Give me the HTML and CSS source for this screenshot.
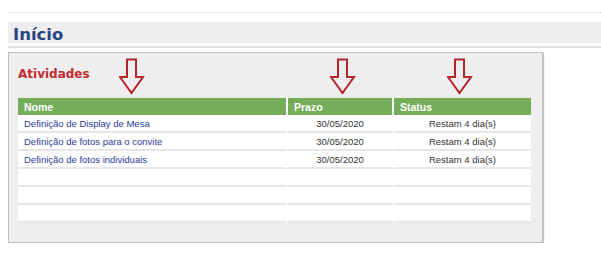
FILE: index.html
```html
<!DOCTYPE html>
<html lang="pt-BR">
  <head>
    <meta charset="UTF-8" />
    <title>Início</title>
    <link rel="stylesheet" href="styles.css">
  </head>
  <body>
    <div class="page">
      <div class="top-line"></div>
      <div class="title-bar">
        <h1>Início</h1>
      </div>
      <div class="title-rule"></div>

      <div class="panel">
        <h2>Atividades</h2>

        <svg class="arrow arrow-nome" width="26" height="37" viewBox="0 0 26 37">
          <path d="M8 1.5 H17 V19 H24 L12.5 35 L1 19 H8 Z" />
        </svg>
        <svg class="arrow arrow-prazo" width="26" height="37" viewBox="0 0 26 37">
          <path d="M8 1.5 H17 V19 H24 L12.5 35 L1 19 H8 Z" />
        </svg>
        <svg class="arrow arrow-status" width="26" height="37" viewBox="0 0 26 37">
          <path d="M8 1.5 H17 V19 H24 L12.5 35 L1 19 H8 Z" />
        </svg>

        <table class="grid">
          <thead>
            <tr>
              <th class="col-nome">Nome</th>
              <th class="col-prazo">Prazo</th>
              <th class="col-status">Status</th>
            </tr>
          </thead>
          <tbody>
            <tr>
              <td><a href="#">Definição de Display de Mesa</a></td>
              <td class="center">30/05/2020</td>
              <td class="center">Restam 4 dia(s)</td>
            </tr>
            <tr>
              <td><a href="#">Definição de fotos para o convite</a></td>
              <td class="center">30/05/2020</td>
              <td class="center">Restam 4 dia(s)</td>
            </tr>
            <tr>
              <td><a href="#">Definição de fotos individuais</a></td>
              <td class="center">30/05/2020</td>
              <td class="center">Restam 4 dia(s)</td>
            </tr>
            <tr><td></td><td></td><td></td></tr>
            <tr><td></td><td></td><td></td></tr>
            <tr><td></td><td></td><td></td></tr>
          </tbody>
        </table>
      </div>
    </div>
  </body>
</html>
```

FILE: styles.css
```css
* {
  box-sizing: border-box;
  margin: 0;
  padding: 0;
}

body {
  font-family: "Liberation Sans", Arial, sans-serif;
  background-color: #fff;
  color: #333;
}

.page {
  padding: 12px 0 0 8px;
}

.top-line {
  border-top: 1px dotted #d4d4d4;
  margin-bottom: 9px;
}

.title-bar {
  background-color: #eeeeee;
  height: 21px;
  padding-left: 5px;
}

.title-bar h1 {
  font-family: "DejaVu Sans", Verdana, sans-serif;
  font-size: 16.5px;
  font-weight: bold;
  line-height: 26px;
  color: #2a4582;
}

.title-rule {
  margin-top: 3px;
  border-top: 2px solid #e2e2e2;
  margin-bottom: 4px;
}

.panel {
  position: relative;
  width: 535px;
  height: 191px;
  background-color: #eeeeee;
  border: 1px solid #bdbdbd;
  box-shadow: 1px 1px 1px #c8c8c8;
  padding: 11px 11px 0 9px;
}

.panel h2 {
  font-family: "DejaVu Sans", Verdana, sans-serif;
  font-size: 12px;
  font-weight: bold;
  line-height: 20px;
  color: #c42a2e;
  margin-bottom: 13px;
}

.arrow {
  position: absolute;
  top: 5px;
}

.arrow path {
  fill: none;
  stroke: #b5252b;
  stroke-width: 2;
  stroke-linejoin: miter;
}

.arrow-nome {
  left: 110px;
}

.arrow-prazo {
  left: 321px;
}

.arrow-status {
  left: 438px;
}

.grid {
  width: 513px;
  border-collapse: separate;
  border-spacing: 0;
  background-color: #fff;
  font-size: 9.5px;
  table-layout: fixed;
}

.grid th {
  background-color: #74ae5b;
  color: #fff;
  font-size: 10.5px;
  font-weight: bold;
  text-align: left;
  height: 18px;
  padding: 0 0 0 6px;
  border-right: 2px solid #fff;
  border-top: 1px solid #e4ede0;
}

.grid th:last-child {
  border-right: none;
}

.col-nome {
  width: 270px;
}

.col-prazo {
  width: 106px;
}

.grid td {
  height: 18px;
  padding: 0 0 0 6px;
  border-bottom: 2px solid #e6e6e6;
  border-right: 2px solid #fff;
  color: #333;
  white-space: nowrap;
}

.grid td:last-child {
  border-right: none;
}

.grid td.center {
  text-align: center;
  padding: 0;
}

.grid a {
  color: #2a3aa0;
  text-decoration: none;
}
```
